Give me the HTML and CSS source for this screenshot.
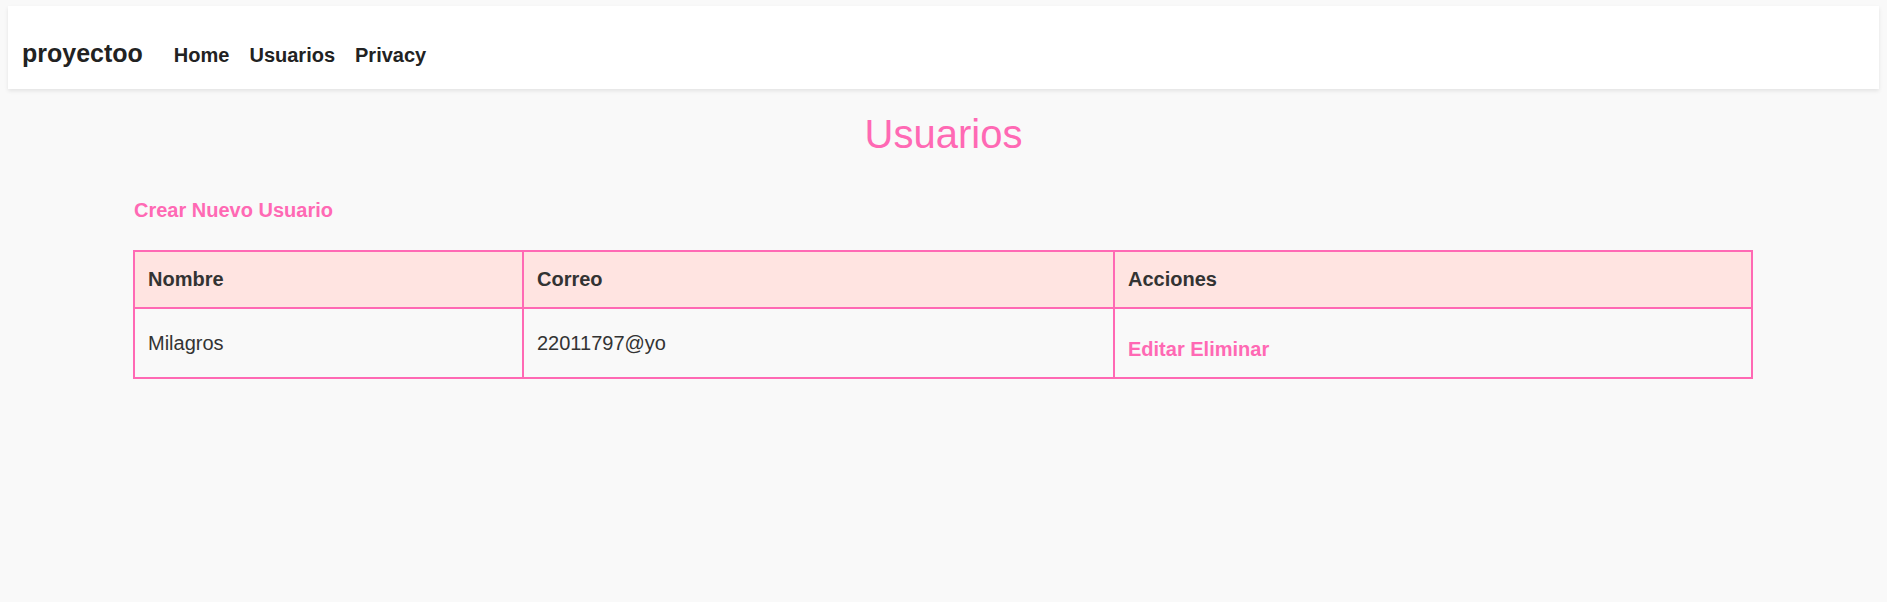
FILE: index.html
```html
<!DOCTYPE html>
<html lang="es">
<head>
<meta charset="utf-8">
<title>Usuarios - proyectoo</title>
<link rel="stylesheet" href="styles.css">
</head>
<body>
<div class="page">
  <header class="navbar">
    <a class="brand" href="#">proyectoo</a>
    <nav class="nav">
      <a class="nav-link" href="#">Home</a>
      <a class="nav-link" href="#">Usuarios</a>
      <a class="nav-link" href="#">Privacy</a>
    </nav>
  </header>
  <main class="main">
    <h1 class="title">Usuarios</h1>
    <div class="content">
      <a class="create-link" href="#">Crear Nuevo Usuario</a>
      <table class="users">
        <colgroup>
          <col class="c1">
          <col class="c2">
          <col class="c3">
        </colgroup>
        <thead>
          <tr>
            <th>Nombre</th>
            <th>Correo</th>
            <th>Acciones</th>
          </tr>
        </thead>
        <tbody>
          <tr>
            <td>Milagros</td>
            <td>22011797@yo</td>
            <td><div class="actions"><a href="#">Editar</a> <a href="#">Eliminar</a></div></td>
          </tr>
        </tbody>
      </table>
    </div>
  </main>
</div>
</body>
</html>
```
FILE: styles.css
```css
html, body {
  margin: 0;
  padding: 0;
  background: #f9f9f9;
}

body {
  font-family: "Liberation Sans", Arial, sans-serif;
  color: #333;
  font-size: 20px;
}

.page {
  padding: 6px 8px 0 8px;
}

a {
  text-decoration: none;
}

.navbar {
  display: flex;
  align-items: baseline;
  background: #ffffff;
  height: 83px;
  box-sizing: border-box;
  padding: 32px 14px 0 14px;
  box-shadow: 0 2px 4px rgba(0, 0, 0, 0.09);
}

.brand {
  font-size: 25px;
  line-height: 30px;
  font-weight: bold;
  color: #222;
  margin-right: 31px;
}

.nav {
  display: flex;
  align-items: baseline;
  gap: 20px;
}

.nav-link {
  font-size: 20px;
  line-height: 30px;
  font-weight: bold;
  color: #222;
}

.main {
  padding-top: 21px;
}

.title {
  margin: 0;
  text-align: center;
  font-size: 40px;
  line-height: 48px;
  font-weight: normal;
  color: #ff69b4;
}

.content {
  width: 1620px;
  margin: 37px 0 0 125px;
}

.create-link {
  display: block;
  width: max-content;
  font-size: 20px;
  line-height: 30px;
  font-weight: bold;
  color: #ff69b4;
  margin: 0 0 25px 1px;
}

.users {
  width: 1620px;
  table-layout: fixed;
  border-collapse: separate;
  border-spacing: 0;
  border-top: 2px solid #ff69b4;
  border-left: 2px solid #ff69b4;
}

.c1 { width: 389px; }
.c2 { width: 591px; }
.c3 { width: 638px; }

.users th,
.users td {
  border-right: 2px solid #ff69b4;
  border-bottom: 2px solid #ff69b4;
  padding: 12px 12px 12px 13px;
  text-align: left;
  vertical-align: middle;
  font-size: 20px;
}

.users th {
  background: #ffe4e1;
  font-weight: bold;
  line-height: 31px;
  color: #333;
}

.users td {
  line-height: 30px;
  color: #333;
}

.actions {
  padding-top: 13px;
  padding-bottom: 1px;
}

.actions a {
  color: #ff69b4;
  font-weight: bold;
}
```
